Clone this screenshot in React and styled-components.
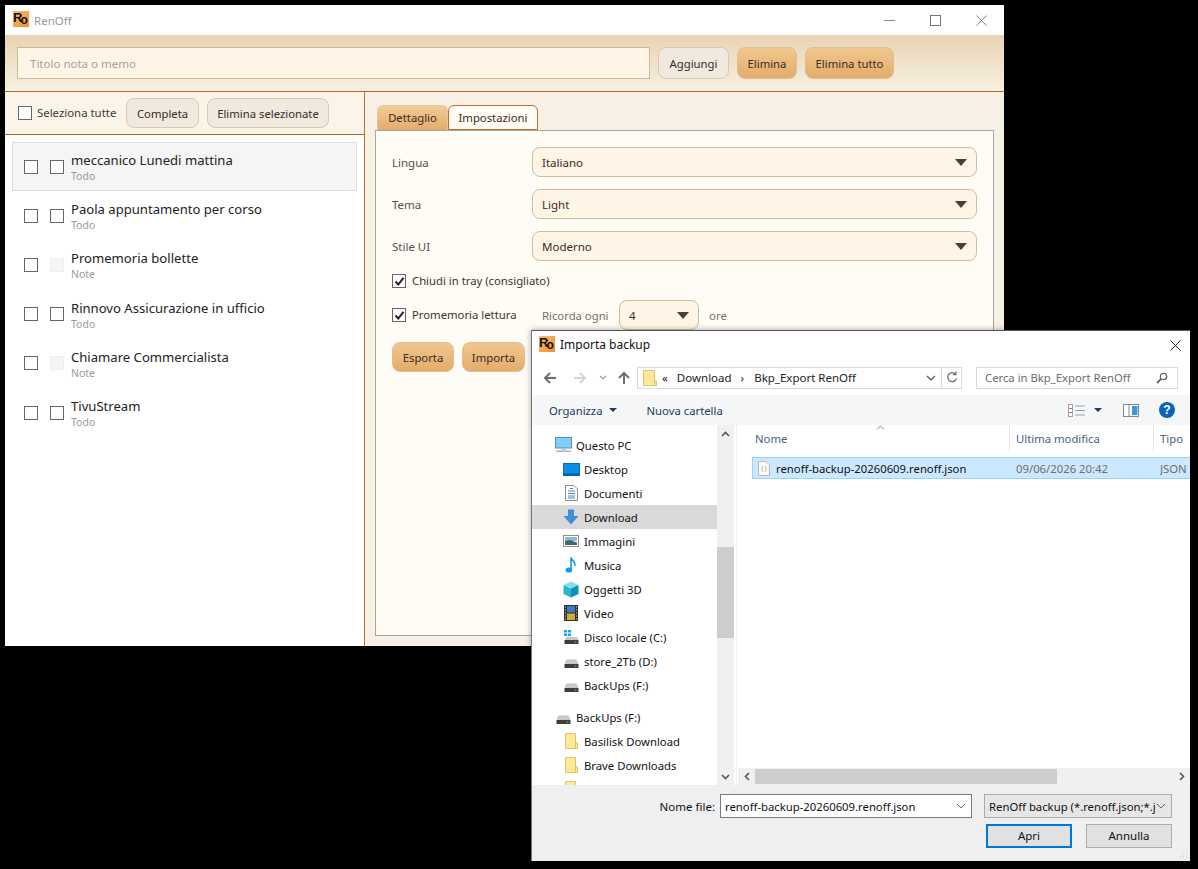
import React from "react";
import styled, { createGlobalStyle } from "styled-components";

const Global = createGlobalStyle`
  html, body { margin: 0; padding: 0; background: #000; }
  body { font-family: "Noto Sans", "Open Sans", sans-serif; font-size: 11.3px; color: #3a2f25; }
  * { box-sizing: border-box; }
  svg { flex: none; }
`;

const Desktop = styled.div`
  position: relative;
  width: 1198px;
  height: 869px;
  overflow: hidden;
  background: #000;
`;

const MainWindow = styled.div`
  position: absolute;
  left: 5px;
  top: 5px;
  width: 999px;
  height: 641px;
  display: flex;
  flex-direction: column;
  background: #f7f0e4;
`;

const TitleBar = styled.div`
  height: 30px;
  flex: none;
  background: #fff;
  display: flex;
  align-items: center;
  padding-left: 8px;
`;

const LogoBox = styled.div`
  width: 16px;
  height: 16px;
  flex: none;
  margin-top: -2px;
  background: linear-gradient(135deg, #f7bd72, #f08f2c);
  font: 700 13px/13px "Liberation Sans", sans-serif;
  color: #111;
  letter-spacing: -2px;
  white-space: nowrap;
`;
const LogoSub = styled.span`
  position: relative;
  top: 2px;
  font-size: 12px;
`;
const Logo = () => (
  <LogoBox>
    R<LogoSub>o</LogoSub>
  </LogoBox>
);

const AppTitle = styled.span`
  margin-left: 5px;
  color: #9a9a9a;
  font-size: 11.5px;
  flex: 1;
`;
const WinButton = styled.div`
  width: 46px;
  height: 30px;
  display: flex;
  align-items: center;
  justify-content: center;
`;

const Header = styled.div`
  height: 57px;
  flex: none;
  display: flex;
  gap: 8px;
  padding: 12px 12px;
  background: linear-gradient(#e8d4b2, #f7f0e2);
  border-bottom: 1px solid #b5652a;
`;
const TitleInput = styled.div`
  width: 633px;
  height: 32px;
  background: #fef5e6;
  border: 1px solid #cfb995;
  color: #a8a29a;
  padding: 0 12px;
  display: flex;
  align-items: center;
  font-size: 11.5px;
`;
const Button = styled.div`
  height: ${(p) => p.$h || 32}px;
  width: ${(p) => p.$w}px;
  flex: none;
  display: flex;
  align-items: center;
  justify-content: center;
  border-radius: 8px;
  font-size: 11.3px;
  color: #3a2c1e;
  border: 1px solid ${(p) => (p.$accent ? "#dcbf96" : "#d9c9ae")};
  background: ${(p) => (p.$accent ? "linear-gradient(#f1c78f, #e3ac6b)" : "#efe9df")};
`;

const Body = styled.div`
  flex: 1;
  display: flex;
  min-height: 0;
`;
const LeftPane = styled.div`
  width: 360px;
  flex: none;
  display: flex;
  flex-direction: column;
  background: #fff;
  border-right: 1px solid #c06d2d;
`;
const LeftToolbar = styled.div`
  height: 43px;
  flex: none;
  display: flex;
  align-items: center;
  padding: 0 0 0 13px;
  background: #fbf4e9;
  border-bottom: 1px solid #b5652a;
`;
const SelectAllLabel = styled.span`
  margin-left: 5px;
  width: 89px;
  font-size: 11.4px;
  color: #3a3a3a;
  margin-top: -1px;
`;
const CheckSquare = styled.div`
  width: ${(p) => p.$s || 14}px;
  height: ${(p) => p.$s || 14}px;
  flex: none;
  border: 1px solid ${(p) => (p.$off ? "#eeeeee" : "#666")};
  background: ${(p) => (p.$off ? "#f5f5f5" : "#fff")};
  display: flex;
  align-items: center;
  justify-content: center;
`;
const ToolbarGap = styled.div`
  width: 8px;
  flex: none;
`;
const List = styled.div`
  padding: 7px 7px;
  display: flex;
  flex-direction: column;
`;
const Row = styled.div`
  height: 49.2px;
  display: flex;
  align-items: center;
  padding-left: 11px;
  border: 1px solid ${(p) => (p.$active ? "#dddddd" : "transparent")};
  background: ${(p) => (p.$active ? "#f5f5f5" : "transparent")};
`;
const RowCheckGap = styled.div`
  width: 12px;
  flex: none;
`;
const RowText = styled.div`
  margin-left: 7px;
  display: flex;
  flex-direction: column;
  margin-top: 2px;
`;
const RowTitle = styled.div`
  font-size: 13.1px;
  line-height: 17px;
  color: #222;
`;
const RowSub = styled.div`
  font-size: 10.5px;
  line-height: 14px;
  color: #9a9a9a;
`;

const RightPane = styled.div`
  flex: 1;
  display: flex;
  flex-direction: column;
  padding: 13px 10px 10px;
  min-width: 0;
`;
const Tabs = styled.div`
  display: flex;
  height: 26px;
  flex: none;
  padding-left: 2px;
`;
const Tab = styled.div`
  width: ${(p) => p.$w}px;
  height: 25px;
  display: flex;
  align-items: center;
  justify-content: center;
  padding-bottom: 1px;
  font-size: 11.3px;
  color: #3a2c1e;
  border-radius: 6px 6px 0 0;
  border: 1px solid ${(p) => (p.$active ? "#c06d2d" : "#e5c79d")};
  border-bottom: ${(p) => (p.$active ? "1px solid #c06d2d" : "none")};
  background: ${(p) => (p.$active ? "#fffbf5" : "linear-gradient(#f2cc98, #e3ac6b)")};
`;
const Panel = styled.div`
  flex: 1;
  margin-top: -1px;
  background: #fffbf5;
  border: 1px solid #aaa69e;
  padding: 16px;
  display: flex;
  flex-direction: column;
`;
const FormRow = styled.div`
  height: 30px;
  flex: none;
  display: flex;
  align-items: center;
  margin-bottom: 12px;
`;
const FormLabel = styled.div`
  width: 140px;
  flex: none;
  font-size: 11.5px;
  color: #55504a;
`;
const Select = styled.div`
  height: 30px;
  flex: ${(p) => (p.$w ? "none" : 1)};
  width: ${(p) => (p.$w ? `${p.$w}px` : "auto")};
  display: flex;
  align-items: center;
  justify-content: space-between;
  padding: 0 9px;
  font-size: 11.5px;
  color: #3a2c1e;
  background: #fef5e6;
  border: 1px solid #d2bd9a;
  border-radius: 8px;
`;
const Caret = styled.div`
  width: 0;
  height: 0;
  border-left: 6px solid transparent;
  border-right: 6px solid transparent;
  border-top: 7px solid #4a3f35;
`;
const CheckRow = styled.div`
  height: ${(p) => p.$h}px;
  margin-top: ${(p) => p.$mt}px;
  flex: none;
  display: flex;
  align-items: center;
`;
const CheckLabel = styled.span`
  margin-left: 6px;
  width: ${(p) => p.$w || "auto"};
  font-size: 11.3px;
  color: #3a342e;
  margin-bottom: 1px;
`;
const MutedLabel = styled.span`
  width: 77px;
  font-size: 11.3px;
  color: #77716a;
`;
const OreLabel = styled.span`
  margin-left: 10px;
  font-size: 11.5px;
  color: #77716a;
`;
const Actions = styled.div`
  display: flex;
  gap: 8px;
  margin-top: 12px;
`;
const Tick = () => (
  <svg width="11" height="11" viewBox="0 0 11 11">
    <path d="M1.5 5.5 L4.3 8.5 L9.5 1.8" fill="none" stroke="#222" strokeWidth="2" />
  </svg>
);

/* dialog */
const Dialog = styled.div`
  position: absolute;
  left: 531px;
  top: 330px;
  width: 659px;
  height: 531px;
  display: flex;
  flex-direction: column;
  background: #fff;
  border-top: 1px solid #555;
  border-left: 1px solid #777;
  box-shadow: 0 0 6px rgba(0, 0, 0, 0.35);
`;
const DlgTitle = styled.div`
  height: 29px;
  flex: none;
  display: flex;
  align-items: center;
  padding-left: 7px;
  font-size: 12px;
  color: #111;
  justify-content: space-between;
`;
const DlgTitleLeft = styled.div`
  display: flex;
  align-items: center;
  gap: 5px;
  margin-top: -2px;
`;
const DlgClose = styled.div`
  width: 30px;
  height: 29px;
  display: flex;
  align-items: center;
  justify-content: center;
`;
const NavBar = styled.div`
  height: 35px;
  flex: none;
  display: flex;
  align-items: center;
  padding: 0 12px 0 10px;
`;
const NavIcon = styled.div`
  width: ${(p) => p.$w}px;
  margin-left: ${(p) => p.$ml || 0}px;
  flex: none;
  display: flex;
  align-items: center;
  justify-content: center;
`;
const AddressBar = styled.div`
  width: 325px;
  height: 22px;
  margin-left: 5px;
  flex: none;
  display: flex;
  align-items: center;
  border: 1px solid #d9d9d9;
  font-size: 11.5px;
  color: #222;
`;
const Crumb = styled.span`
  margin-left: ${(p) => p.$ml}px;
`;
const AddrEnd = styled.div`
  margin-left: auto;
  display: flex;
  align-items: center;
  height: 20px;
`;
const AddrCell = styled.div`
  width: ${(p) => p.$w}px;
  height: 20px;
  display: flex;
  align-items: center;
  justify-content: center;
  border-left: ${(p) => (p.$sep ? "1px solid #d9d9d9" : "none")};
`;
const SearchBox = styled.div`
  width: 202px;
  height: 22px;
  margin-left: 14px;
  flex: none;
  display: flex;
  align-items: center;
  justify-content: space-between;
  padding: 0 9px 0 8px;
  border: 1px solid #d9d9d9;
  font-size: 11.3px;
  color: #6d6d6d;
`;
const CmdBar = styled.div`
  height: 30px;
  flex: none;
  display: flex;
  align-items: center;
  background: #f5f6f7;
  padding: 0 15px 0 17px;
  font-size: 11.3px;
  color: #1e3a5f;
`;
const CmdCaret = styled.div`
  width: 0;
  height: 0;
  margin-left: ${(p) => p.$ml}px;
  border-left: 4px solid transparent;
  border-right: 4px solid transparent;
  border-top: 4px solid #1e3a5f;
`;
const NewFolder = styled.span`
  margin-left: 30px;
`;
const CmdRight = styled.div`
  margin-left: auto;
  display: flex;
  align-items: center;
`;
const CmdSpacer = styled.div`
  width: 21px;
`;
const Browser = styled.div`
  flex: 1;
  min-height: 0;
  display: flex;
`;
const Tree = styled.div`
  width: 185px;
  flex: none;
  overflow: hidden;
  padding-top: 8px;
`;
const TreeRow = styled.div`
  height: 24px;
  display: flex;
  align-items: center;
  padding-left: ${(p) => (p.$root ? 22 : 30)}px;
  margin-top: ${(p) => p.$mt || 0}px;
  background: ${(p) => (p.$active ? "#d9d9d9" : "transparent")};
  font-size: 11.3px;
  color: #111;
`;
const TreeIcon = styled.div`
  width: 18px;
  height: 18px;
  flex: none;
  margin-right: 4px;
  display: flex;
  align-items: center;
  justify-content: center;
`;
const VScroll = styled.div`
  width: 17px;
  flex: none;
  background: #f0f0f0;
  display: flex;
  flex-direction: column;
  align-items: center;
  justify-content: space-between;
  position: relative;
`;
const ScrollArrow = styled.div`
  position: relative;
  height: 17px;
  display: flex;
  align-items: center;
  justify-content: center;
`;
const VThumb = styled.div`
  position: absolute;
  left: 0;
  top: 122px;
  width: 17px;
  height: 91px;
  background: #cdcdcd;
`;
const FilesPane = styled.div`
  flex: 1;
  min-width: 0;
  display: flex;
  flex-direction: column;
  border-left: 1px solid #f0f0f0;
  margin-left: 2px;
`;
const FileHead = styled.div`
  height: 27px;
  flex: none;
  display: flex;
  position: relative;
  font-size: 11.3px;
  color: #4c607a;
`;
const HeadCell = styled.div`
  width: ${(p) => p.$w}px;
  flex: none;
  padding-left: ${(p) => p.$pl}px;
  display: flex;
  align-items: center;
  border-right: ${(p) => (p.$sep ? "1px solid #e5e5e5" : "none")};
  margin-bottom: 1px;
`;
const SortMark = styled.div`
  position: absolute;
  left: 139px;
  top: 0;
  line-height: 0;
`;
const FileList = styled.div`
  flex: 1;
  padding: 5px 0 0 15px;
`;
const FileRow = styled.div`
  height: 22px;
  display: flex;
  align-items: center;
  background: #cce8ff;
  border: 1px solid #99d1ff;
  border-right: none;
  font-size: 11.3px;
  color: #111;
  padding-left: 5px;
`;
const FileName = styled.span`
  margin-left: 6px;
  width: 240px;
  flex: none;
`;
const FileDate = styled.span`
  width: 144px;
  flex: none;
  color: #6d6d6d;
`;
const FileType = styled.span`
  flex: 1;
  min-width: 0;
  overflow: hidden;
  color: #6d6d6d;
`;
const HScroll = styled.div`
  height: 17px;
  flex: none;
  display: flex;
  align-items: center;
  background: #f0f0f0;
  margin-left: 1px;
`;
const HThumb = styled.div`
  width: 302px;
  height: 15px;
  background: #cdcdcd;
`;
const HArrow = styled.div`
  width: 17px;
  display: flex;
  justify-content: center;
  margin-left: ${(p) => (p.$end ? "auto" : "0")};
`;
const Footer = styled.div`
  height: 76px;
  flex: none;
  background: #efefef;
  padding: 9px 18px 0 0;
  position: relative;
`;
const FooterRow = styled.div`
  display: flex;
  align-items: center;
  height: 24px;
`;
const NameLabel = styled.div`
  width: 184px;
  text-align: right;
  font-size: 11.5px;
  color: #111;
`;
const NameInput = styled.div`
  width: 252px;
  height: 24px;
  margin-left: 5px;
  flex: none;
  display: flex;
  align-items: center;
  justify-content: space-between;
  padding: 0 5px 0 4px;
  background: #fff;
  border: 1px solid #7a7a7a;
  font-size: 11.3px;
  color: #111;
`;
const FilterSelect = styled.div`
  width: 188px;
  height: 24px;
  margin-left: 12px;
  flex: none;
  display: flex;
  align-items: center;
  justify-content: space-between;
  padding: 0 5px 0 4px;
  background: #e6e6e6;
  border: 1px solid #acacac;
  font-size: 11.3px;
  color: #111;
`;
const FilterText = styled.span`
  white-space: nowrap;
  min-width: 0;
`;
const FooterButtons = styled.div`
  display: flex;
  justify-content: flex-end;
  gap: 14px;
  margin-top: 6px;
`;
const DlgButton = styled.div`
  width: 86px;
  height: 24px;
  display: flex;
  align-items: center;
  justify-content: center;
  font-size: 11.5px;
  color: #111;
  background: #e1e1e1;
  padding-bottom: 1px;
  border: ${(p) => (p.$primary ? "2px solid #0078d7" : "1px solid #adadad")};
`;
const Grip = styled.div`
  position: absolute;
  right: 2px;
  bottom: 2px;
  line-height: 0;
`;

/* icons */
const Chevron = ({ d = "M1 1 L5 5 L9 1", w = 10, h = 6, c = "#777", sw = 1.2 }) => (
  <svg width={w} height={h} viewBox={`0 0 ${w} ${h}`}>
    <path d={d} fill="none" stroke={c} strokeWidth={sw} />
  </svg>
);
const Arrow = ({ dir, c }) => (
  <svg width="16" height="16" viewBox="0 0 16 16">
    <g transform={dir === "up" ? "rotate(90 8 8)" : dir === "right" ? "rotate(180 8 8)" : undefined}>
      <path d="M14 8 H3 M8 3 L3 8 L8 13" fill="none" stroke={c} strokeWidth="2" />
    </g>
  </svg>
);
const Monitor = () => (
  <svg width="17" height="16" viewBox="0 0 17 16">
    <rect x="0.5" y="0.5" width="16" height="10.5" fill="#7fd0f7" stroke="#5a8fb0" />
    <rect x="6.5" y="11" width="4" height="2" fill="#b7c4cc" />
    <rect x="1" y="13.5" width="15" height="1.5" fill="#a9b4bb" />
  </svg>
);
const DesktopIcon = () => (
  <svg width="17" height="13" viewBox="0 0 17 13">
    <rect width="16" height="12" x="0.5" y="0.5" fill="#0a8ee8" stroke="#0a6cb5" />
    <rect x="1" y="10.5" width="15" height="1.5" fill="#0559a0" />
  </svg>
);
const DocIcon = () => (
  <svg width="13" height="16" viewBox="0 0 13 16">
    <path d="M0.5 0.5 H9 L12.5 4 V15.5 H0.5 Z" fill="#fff" stroke="#8d8d8d" />
    <path d="M5 3.5 H8 M3 6 H10 M3 8.5 H10 M3 11 H10 M3 13 H10" stroke="#4a86b8" strokeWidth="1" />
  </svg>
);
const DownloadIcon = () => (
  <svg width="16" height="16" viewBox="0 0 16 16">
    <path d="M5 0.5 H11 V7 H15.5 L8 15.5 L0.5 7 H5 Z" fill="#3d8fdc" />
  </svg>
);
const ImageIcon = () => (
  <svg width="16" height="12" viewBox="0 0 16 12">
    <rect x="0.5" y="0.5" width="15" height="11" fill="#fff" stroke="#8d8d8d" />
    <rect x="2" y="2" width="12" height="4" fill="#8fb8da" />
    <path d="M2 6 L7 5 L14 7.5 V10 H2 Z" fill="#3f6d6a" />
  </svg>
);
const MusicIcon = () => (
  <svg width="12" height="16" viewBox="0 0 12 16">
    <ellipse cx="3.8" cy="13" rx="3.3" ry="2.6" fill="#0a9cf0" />
    <path d="M6 13 V0.5 C7 4 11 5 10 9" fill="none" stroke="#0a9cf0" strokeWidth="1.6" />
  </svg>
);
const CubeIcon = () => (
  <svg width="16" height="17" viewBox="0 0 16 17">
    <path d="M8 0.5 L15.5 4 L8 7.5 L0.5 4 Z" fill="#7fe0ea" />
    <path d="M0.5 4 L8 7.5 V16.5 L0.5 13 Z" fill="#2bb3cf" />
    <path d="M15.5 4 L8 7.5 V16.5 L15.5 13 Z" fill="#0f8fb8" />
  </svg>
);
const FilmIcon = () => (
  <svg width="14" height="16" viewBox="0 0 14 16">
    <rect width="14" height="16" fill="#2f2f2f" />
    <rect x="3" y="1" width="8" height="6.5" fill="#3a78c2" />
    <rect x="3" y="8.5" width="8" height="6.5" fill="#d1a93c" />
    <path d="M1 2 H2 M1 5 H2 M1 8 H2 M1 11 H2 M1 14 H2 M12 2 H13 M12 5 H13 M12 8 H13 M12 11 H13 M12 14 H13" stroke="#ddd" />
  </svg>
);
const DriveIcon = ({ win }) => (
  <svg width="15" height="15" viewBox="0 0 15 15">
    {win && <path d="M0 0 H3 V2.5 H0 Z M4 0 H7 V2.5 H4 Z M0 3.5 H3 V6 H0 Z M4 3.5 H7 V6 H4 Z" fill="#14a3ee" />}
    <path d={win ? "M2 7 H13 L14.5 10 H0.5 Z" : "M2.5 5.5 H12.5 L14.5 10 H0.5 Z"} fill="#c8c8c8" />
    <rect x="0.5" y="10" width="14" height="4" fill="#3c3c3c" />
    <rect x="10.5" y="11.5" width="2" height="1" fill="#3ddc5a" />
  </svg>
);
const FolderIcon = () => (
  <svg width="13" height="16" viewBox="0 0 13 16">
    <path d="M0.5 0.5 H10.5 V15.5 H0.5 Z" fill="#fde99a" stroke="#e3c45f" />
    <path d="M10.5 10 H12.5 V15.5 H10.5 Z" fill="#fde99a" stroke="#e3c45f" />
  </svg>
);
const AddrFolder = () => (
  <svg width="14" height="16" viewBox="0 0 14 16">
    <path d="M0.5 0.5 H11.5 V15.5 H0.5 Z" fill="#fde99a" stroke="#e3c45f" />
    <path d="M11.5 11 H13.5 V15.5 H11.5 Z" fill="#fde99a" stroke="#e3c45f" />
  </svg>
);
const JsonFile = () => (
  <svg width="12" height="15" viewBox="0 0 12 15">
    <path d="M0.5 0.5 H8 L11.5 4 V14.5 H0.5 Z" fill="#f8f8f8" stroke="#b8b8b8" />
    <path d="M5 5 C3.8 5.5 4.5 7.5 3.8 8 C4.5 8.5 3.8 10.5 5 11 M7 5 C8.2 5.5 7.5 7.5 8.2 8 C7.5 8.5 8.2 10.5 7 11" fill="none" stroke="#a8b86c" strokeWidth="0.8" />
  </svg>
);
const ViewsIcon = () => (
  <svg width="17" height="13" viewBox="0 0 17 13">
    <rect x="0.5" y="0.5" width="4" height="12" fill="#fff" stroke="#9aa2aa" />
    <path d="M1 4.5 H4 M1 8.5 H4" stroke="#d06a5a" />
    <path d="M7 2 H17 M7 6.5 H17 M7 11 H17" stroke="#9aa2aa" />
  </svg>
);
const PaneIcon = () => (
  <svg width="16" height="13" viewBox="0 0 16 13">
    <rect x="0.5" y="0.5" width="15" height="12" fill="#fff" stroke="#7c8894" />
    <rect x="9" y="2" width="5.5" height="9" fill="#3d95e0" />
    <path d="M6 1 V12" stroke="#7c8894" />
  </svg>
);
const HelpIcon = styled.div`
  width: 16px;
  height: 16px;
  margin-left: 20px;
  border-radius: 50%;
  background: #0a63b8;
  color: #fff;
  font: 700 12px/16px "Liberation Sans", sans-serif;
  text-align: center;
`;
const Cross = ({ s = 12, c = "#666", sw = 1 }) => (
  <svg width={s} height={s} viewBox="0 0 12 12">
    <path d="M0.5 0.5 L11.5 11.5 M11.5 0.5 L0.5 11.5" fill="none" stroke={c} strokeWidth={sw} />
  </svg>
);

const notes = [
  ["meccanico Lunedi mattina", "Todo", true],
  ["Paola appuntamento per corso", "Todo"],
  ["Promemoria bollette", "Note"],
  ["Rinnovo Assicurazione in ufficio", "Todo"],
  ["Chiamare Commercialista", "Note"],
  ["TivuStream", "Todo"],
];

const tree = [
  { label: "Questo PC", icon: <Monitor />, root: true },
  { label: "Desktop", icon: <DesktopIcon /> },
  { label: "Documenti", icon: <DocIcon /> },
  { label: "Download", icon: <DownloadIcon />, active: true },
  { label: "Immagini", icon: <ImageIcon /> },
  { label: "Musica", icon: <MusicIcon /> },
  { label: "Oggetti 3D", icon: <CubeIcon /> },
  { label: "Video", icon: <FilmIcon /> },
  { label: "Disco locale (C:)", icon: <DriveIcon win /> },
  { label: "store_2Tb (D:)", icon: <DriveIcon /> },
  { label: "BackUps (F:)", icon: <DriveIcon /> },
  { label: "BackUps (F:)", icon: <DriveIcon />, root: true, mt: 8 },
  { label: "Basilisk Download", icon: <FolderIcon /> },
  { label: "Brave Downloads", icon: <FolderIcon /> },
  { label: "", icon: <FolderIcon /> },
];

export default function App() {
  return (
    <Desktop>
      <Global />
      <MainWindow>
        <TitleBar>
          <Logo />
          <AppTitle>RenOff</AppTitle>
          <WinButton>
            <svg width="11" height="1" viewBox="0 0 11 1"><rect width="11" height="1" fill="#888" /></svg>
          </WinButton>
          <WinButton>
            <svg width="11" height="11" viewBox="0 0 11 11"><rect x="0.5" y="0.5" width="10" height="10" fill="none" stroke="#777" /></svg>
          </WinButton>
          <WinButton>
            <Cross s={11} c="#777" />
          </WinButton>
        </TitleBar>
        <Header>
          <TitleInput>Titolo nota o memo</TitleInput>
          <Button $w={71}>Aggiungi</Button>
          <Button $w={60} $accent>Elimina</Button>
          <Button $w={89} $accent>Elimina tutto</Button>
        </Header>
        <Body>
          <LeftPane>
            <LeftToolbar>
              <CheckSquare $s={14} />
              <SelectAllLabel>Seleziona tutte</SelectAllLabel>
              <Button $w={73} $h={30}>Completa</Button>
              <ToolbarGap />
              <Button $w={122} $h={30}>Elimina selezionate</Button>
            </LeftToolbar>
            <List>
              {notes.map(([title, kind, active]) => (
                <Row key={title} $active={active}>
                  <CheckSquare />
                  <RowCheckGap />
                  <CheckSquare $off={kind === "Note"} />
                  <RowText>
                    <RowTitle>{title}</RowTitle>
                    <RowSub>{kind}</RowSub>
                  </RowText>
                </Row>
              ))}
            </List>
          </LeftPane>
          <RightPane>
            <Tabs>
              <Tab $w={71}>Dettaglio</Tab>
              <Tab $w={90} $active>Impostazioni</Tab>
            </Tabs>
            <Panel>
              <FormRow>
                <FormLabel>Lingua</FormLabel>
                <Select>Italiano<Caret /></Select>
              </FormRow>
              <FormRow>
                <FormLabel>Tema</FormLabel>
                <Select>Light<Caret /></Select>
              </FormRow>
              <FormRow>
                <FormLabel>Stile UI</FormLabel>
                <Select>Moderno<Caret /></Select>
              </FormRow>
              <CheckRow $h={24} $mt={-4}>
                <CheckSquare><Tick /></CheckSquare>
                <CheckLabel>Chiudi in tray (consigliato)</CheckLabel>
              </CheckRow>
              <CheckRow $h={30} $mt={7}>
                <CheckSquare><Tick /></CheckSquare>
                <CheckLabel $w="130px">Promemoria lettura</CheckLabel>
                <MutedLabel>Ricorda ogni</MutedLabel>
                <Select $w={80}>4<Caret /></Select>
                <OreLabel>ore</OreLabel>
              </CheckRow>
              <Actions>
                <Button $w={62} $h={30} $accent>Esporta</Button>
                <Button $w={63} $h={30} $accent>Importa</Button>
              </Actions>
            </Panel>
          </RightPane>
        </Body>
      </MainWindow>

      <Dialog>
        <DlgTitle>
          <DlgTitleLeft>
            <Logo />
            Importa backup
          </DlgTitleLeft>
          <DlgClose><Cross s={11} c="#111" /></DlgClose>
        </DlgTitle>
        <NavBar>
          <NavIcon $w={16}><Arrow c="#6d6d6d" /></NavIcon>
          <NavIcon $w={16} $ml={14}><Arrow dir="right" c="#d4d4d4" /></NavIcon>
          <NavIcon $w={10} $ml={10}><Chevron w={8} h={5} d="M1 1 L4 4 L7 1" c="#9a9a9a" /></NavIcon>
          <NavIcon $w={16} $ml={8}><Arrow dir="up" c="#6d6d6d" /></NavIcon>
          <AddressBar>
            <NavIcon $w={17} $ml={3}><AddrFolder /></NavIcon>
            <Crumb $ml={4}>«</Crumb>
            <Crumb $ml={9}>Download</Crumb>
            <Crumb $ml={9}>›</Crumb>
            <Crumb $ml={10}>Bkp_Export RenOff</Crumb>
            <AddrEnd>
              <AddrCell $w={20}><Chevron w={10} h={6} c="#555" /></AddrCell>
              <AddrCell $w={20} $sep>
                <svg width="12" height="13" viewBox="0 0 12 13">
                  <path d="M9.5 3 A4.5 4.5 0 1 0 10.5 7.5 M9.8 0.5 V3.5 H6.8" fill="none" stroke="#777" strokeWidth="1.4" />
                </svg>
              </AddrCell>
            </AddrEnd>
          </AddressBar>
          <SearchBox>
            Cerca in Bkp_Export RenOff
            <svg width="12" height="12" viewBox="0 0 12 12">
              <circle cx="7.5" cy="4.5" r="3.2" fill="none" stroke="#666" strokeWidth="1.3" />
              <path d="M5 7 L1 11" stroke="#666" strokeWidth="1.8" />
            </svg>
          </SearchBox>
        </NavBar>
        <CmdBar>
          Organizza
          <CmdCaret $ml={6} />
          <NewFolder>Nuova cartella</NewFolder>
          <CmdRight>
            <ViewsIcon />
            <CmdCaret $ml={9} />
            <CmdSpacer />
            <PaneIcon />
            <HelpIcon>?</HelpIcon>
          </CmdRight>
        </CmdBar>
        <Browser>
          <Tree>
            {tree.map((t, i) => (
              <TreeRow key={i} $root={t.root} $active={t.active} $mt={t.mt}>
                <TreeIcon>{t.icon}</TreeIcon>
                {t.label}
              </TreeRow>
            ))}
          </Tree>
          <VScroll>
            <VThumb />
            <ScrollArrow><Chevron w={9} h={6} d="M1 5 L4.5 1.5 L8 5" c="#555" sw={1.6} /></ScrollArrow>
            <ScrollArrow><Chevron w={9} h={6} d="M1 1 L4.5 4.5 L8 1" c="#555" sw={1.6} /></ScrollArrow>
          </VScroll>
          <FilesPane>
            <FileHead>
              <SortMark><Chevron w={9} h={5} d="M1 4.5 L4.5 1 L8 4.5" c="#888" sw={1} /></SortMark>
              <HeadCell $w={273} $pl={18} $sep>Nome</HeadCell>
              <HeadCell $w={144} $pl={6} $sep>Ultima modifica</HeadCell>
              <HeadCell $w={36} $pl={6}>Tipo</HeadCell>
            </FileHead>
            <FileList>
              <FileRow>
                <JsonFile />
                <FileName>renoff-backup-20260609.renoff.json</FileName>
                <FileDate>09/06/2026 20:42</FileDate>
                <FileType>JSON</FileType>
              </FileRow>
            </FileList>
            <HScroll>
              <HArrow><Chevron w={6} h={9} d="M5 1 L1.5 4.5 L5 8" c="#555" sw={1.6} /></HArrow>
              <HThumb />
              <HArrow $end><Chevron w={6} h={9} d="M1 1 L4.5 4.5 L1 8" c="#555" sw={1.6} /></HArrow>
            </HScroll>
          </FilesPane>
        </Browser>
        <Footer>
          <FooterRow>
            <NameLabel>Nome file:</NameLabel>
            <NameInput>
              renoff-backup-20260609.renoff.json
              <Chevron w={10} h={6} c="#666" sw={1} />
            </NameInput>
            <FilterSelect>
              <FilterText>RenOff backup (*.renoff.json;*.j</FilterText>
              <Chevron w={10} h={6} c="#666" sw={1} />
            </FilterSelect>
          </FooterRow>
          <FooterButtons>
            <DlgButton $primary>Apri</DlgButton>
            <DlgButton>Annulla</DlgButton>
          </FooterButtons>
          <Grip>
            <svg width="9" height="9" viewBox="0 0 9 9">
              <path d="M7 1 H8 M4 4 H5 M7 4 H8 M1 7 H2 M4 7 H5 M7 7 H8" stroke="#c4c4c4" />
            </svg>
          </Grip>
        </Footer>
      </Dialog>
    </Desktop>
  );
}
